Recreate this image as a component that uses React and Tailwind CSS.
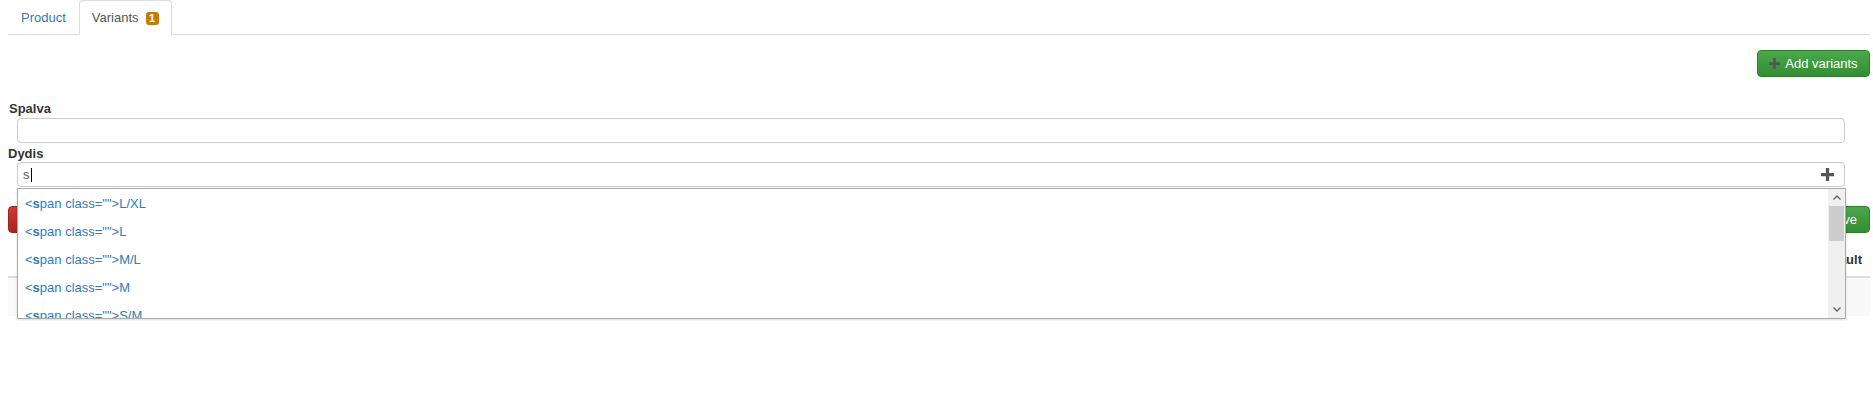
import { useState } from 'react';

const items = ['L/XL', 'L', 'M/L', 'M', 'S/M', 'S', 'XS'];

function Plus({ className }) {
  return (
    <svg viewBox="0 0 12 12" className={className} fill="currentColor">
      <path d="M4.5 0h3v4.5H12v3H7.5V12h-3V7.5H0v-3h4.5z" />
    </svg>
  );
}

export default function App() {
  const [tab, setTab] = useState('variants');

  return (
    <div className="min-h-screen bg-white pl-2 pr-[3px] text-[13px] leading-[18px] text-[#333]" style={{ fontFamily: '"Liberation Sans", Arial, sans-serif' }}>
      {/* Tabs */}
      <div className="flex h-[35px] border-b border-[#ddd]">
        <button
          onClick={() => setTab('product')}
          className="h-[35px] px-[13px] text-[#337ab7]"
        >
          Product
        </button>
        <button
          onClick={() => setTab('variants')}
          className="-mb-px flex h-[35px] items-center gap-[7px] rounded-t-[4px] border border-b-0 border-[#ddd] bg-white px-[12px] text-[#555]"
        >
          Variants
          <span className="flex h-[13px] w-[13px] items-center justify-center rounded-[3px] bg-[#c77a0a] text-[11px] font-bold leading-none text-white">1</span>
        </button>
      </div>

      <div className="mt-[15px] flex justify-end">
        <button className="flex h-[27px] w-[113px] items-center justify-center gap-[5px] rounded-[4px] border border-[#2f7f2f] bg-gradient-to-b from-[#4aa84a] to-[#348d34] text-white">
          <Plus className="h-[11px] w-[11px] text-[#555]" />
          Add variants
        </button>
      </div>

      {/* Form */}
      <div className="mt-[22px] pr-[25px]">
        <label className="block h-[18px] pl-px font-bold leading-[20px]">Spalva</label>
        <div className="ml-[9px] mt-px h-[25px] rounded-[4px] border border-[#ccc] bg-white"></div>

        <label className="mt-px block h-[18px] font-bold leading-[20px]">Dydis</label>
        <div className="relative z-10 ml-[9px]">
          <div className="flex h-[25px] items-center rounded-[4px] border border-[#ccc] bg-white pl-[5px] pr-[10px] text-[#555]">
            <span>s</span>
            <span className="ml-px h-[14px] w-px bg-black"></span>
            <Plus className="ml-auto h-[13px] w-[13px] text-[#555]" />
          </div>

          {/* Autocomplete list */}
          <div className="absolute left-0 right-[-1px] top-[26px] flex h-[131px] border border-[#aaa] bg-white shadow-[0_1px_2px_rgba(0,0,0,0.15)]">
            <div className="flex-1 overflow-hidden pt-px">
              {items.map((s) => (
                <div key={s} className="flex h-[28px] items-center pl-[7px] text-[#337ab7]">
                  &lt;<b>s</b>pan class=""&gt;{s}
                </div>
              ))}
            </div>
            <div className="flex w-[17px] flex-col bg-[#f0f0f0]">
              <div className="flex h-[17px] items-center justify-center">
                <svg viewBox="0 0 8 5" className="h-[5px] w-[8px]" fill="none" stroke="#606060" strokeWidth="1.3"><path d="M0.5 4.5 4 1l3.5 3.5" /></svg>
              </div>
              <div className="mx-px h-[35px] bg-[#cdcdcd]"></div>
              <div className="flex-1"></div>
              <div className="flex h-[17px] items-center justify-center">
                <svg viewBox="0 0 8 5" className="h-[5px] w-[8px]" fill="none" stroke="#606060" strokeWidth="1.3"><path d="M0.5 0.5 4 4l3.5-3.5" /></svg>
              </div>
            </div>
          </div>
        </div>
      </div>

      {/* Actions behind the list */}
      <div className="mt-[19px] flex justify-between">
        <button className="h-[27px] rounded-[4px] border border-[#9a2420] bg-gradient-to-b from-[#cf3a34] to-[#a9261f] px-3 text-white">Delete</button>
        <button className="h-[27px] rounded-[4px] border border-[#2f7f2f] bg-gradient-to-b from-[#4aa84a] to-[#348d34] px-3 text-white">Save</button>
      </div>

      {/* Table */}
      <table className="mt-[10px] w-full border-collapse">
        <thead>
          <tr className="border-b-2 border-[#ddd]">
            <th className="h-[34px] pl-6 text-left font-bold">Variant</th>
            <th className="px-2 text-right font-bold">Default</th>
          </tr>
        </thead>
        <tbody>
          <tr className="bg-[#f9f9f9]">
            <td className="h-[39px] px-2"></td>
            <td className="px-2"></td>
          </tr>
        </tbody>
      </table>
    </div>
  );
}
